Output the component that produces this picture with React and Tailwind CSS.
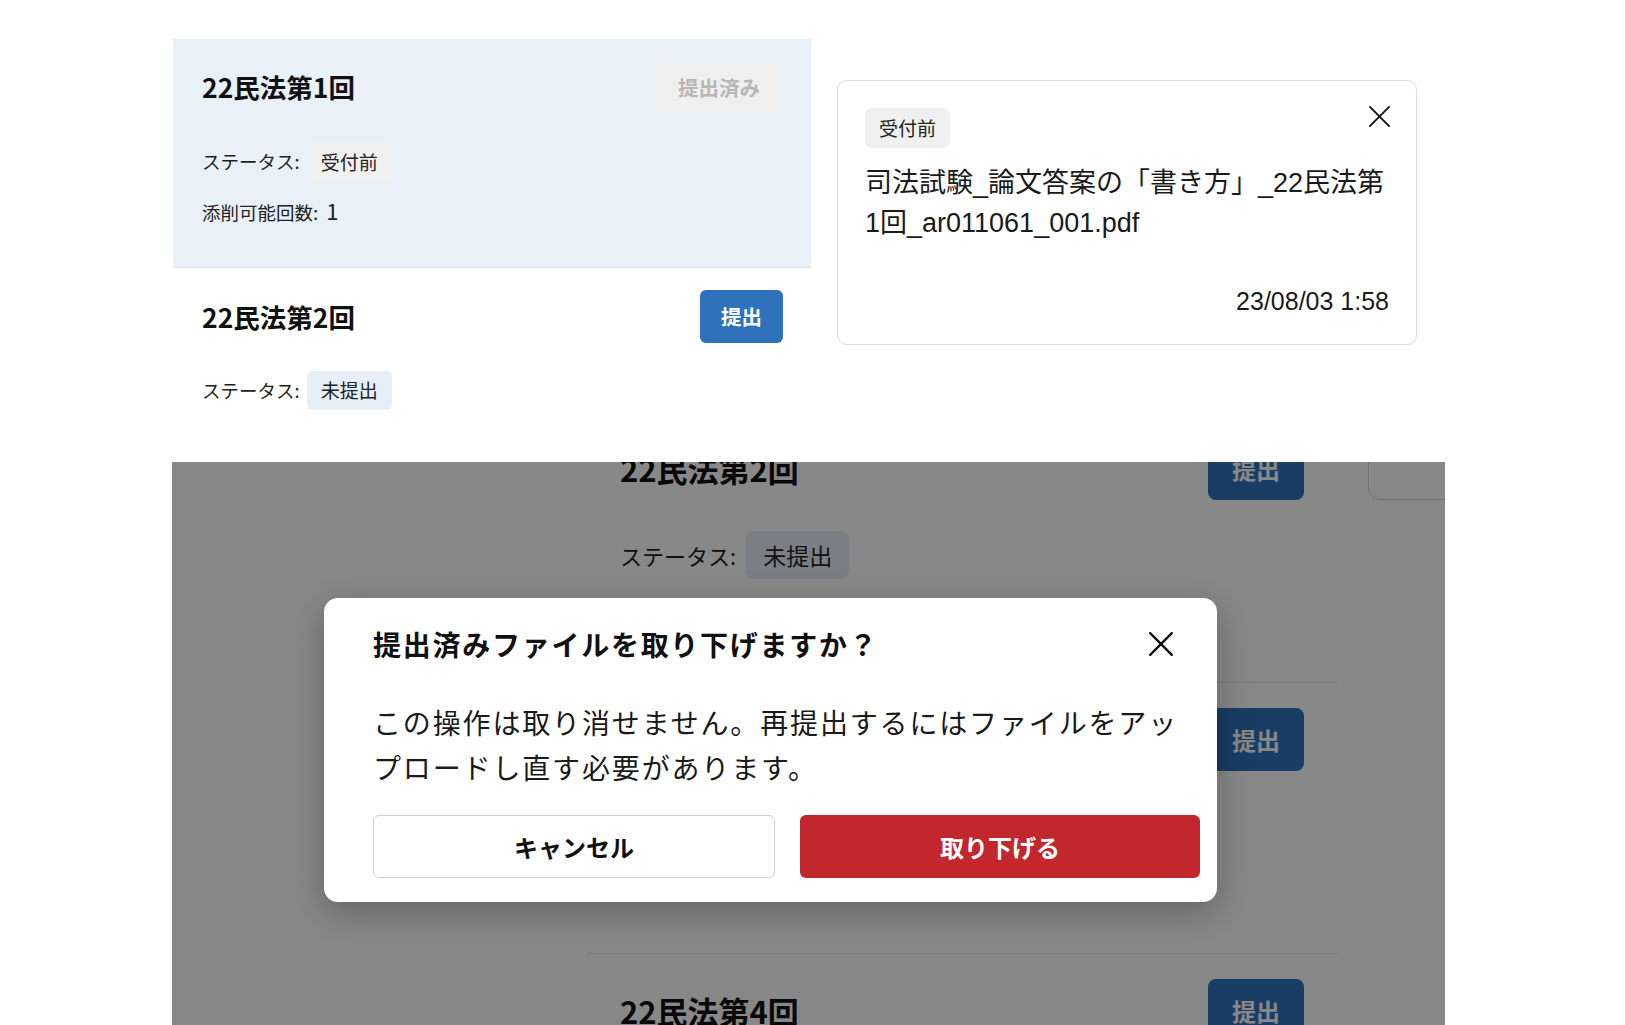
import React from 'react';

const font = "font-['Noto_Sans_CJK_JP',sans-serif]";
const latinFont = "font-['Liberation_Sans','Noto_Sans_CJK_JP',sans-serif]";

function CloseIcon({ size = 24, stroke = 2 }) {
    return (
        <svg width={size} height={size} viewBox="0 0 24 24" fill="none" stroke="#111" strokeWidth={stroke} strokeLinecap="round">
            <path d="M2 2L22 22" />
            <path d="M22 2L2 22" />
        </svg>
    );
}

// Top list (normal scale)
function TopList() {
    return (
        <div className="w-[638px] shrink-0">
            {/* item 1 - selected */}
            <div className="h-[229px] bg-[#e8f0f8] border-b border-[#dde2e8] px-[29px] pt-[23px]">
                <div className="flex items-center justify-between">
                    <h2 className="text-[26.5px] font-bold text-[#111] leading-[36px]">22民法第1回</h2>
                    <button className="h-[50px] px-[22px] rounded-md bg-[#efefef] text-[#b7b7b7] text-[20.5px] font-bold">
                        提出済み
                    </button>
                </div>
                <div className="mt-[30px] flex items-center">
                    <span className="text-[18.5px] text-[#222]">ステータス:</span>
                    <span className="ml-[7px] h-[40px] px-[14px] flex items-center rounded-md bg-[#f0f0f0] text-[19px] text-[#222]">受付前</span>
                </div>
                <div className="mt-[14px] flex items-baseline leading-[28px]">
                    <span className="text-[18.5px] text-[#222]">添削可能回数:</span>
                    <span className="ml-[8px] text-[22px] text-[#222]">1</span>
                </div>
            </div>
            {/* item 2 */}
            <div className="px-[28px] pl-[29px] pt-[22px]">
                <div className="flex items-center justify-between">
                    <h2 className="text-[26.5px] font-bold text-[#111] leading-[36px]">22民法第2回</h2>
                    <button className="h-[53px] px-[21px] rounded-md bg-[#2f72bb] text-white text-[20.5px] font-bold">
                        提出
                    </button>
                </div>
                <div className="mt-[28px] flex items-center">
                    <span className="text-[18.5px] text-[#222]">ステータス:</span>
                    <span className="ml-[7px] h-[39px] px-[14px] flex items-center rounded-md bg-[#e6eef7] text-[19px] text-[#222]">未提出</span>
                </div>
            </div>
        </div>
    );
}

function FileCard() {
    return (
        <div className="mt-[41px] ml-[26px] w-[580px] h-[265px] border border-[#dadada] rounded-[10px] pl-[27px] pr-[25px] pt-[24px] pb-[28px] flex flex-col">
            <div className="flex items-start justify-between">
                <span className="mt-[3px] h-[40px] px-[14px] flex items-center rounded-md bg-[#f0f0f0] text-[19px] text-[#222]">受付前</span>
                <CloseIcon size={23} stroke={2} />
            </div>
            <p className={`mt-[15px] text-[27px] leading-[40px] text-[#1a1a1a] ${latinFont}`}>
                司法試験_論文答案の「書き方」_22民法第<br />1回_ar011061_001.pdf
            </p>
            <div className={`mt-auto mr-[2px] text-right text-[25px] leading-[30px] text-[#1a1a1a] ${latinFont}`}>
                23/08/03 1:58
            </div>
        </div>
    );
}

// Underlying list behind the modal (zoomed screenshot, ~1.18x)
function BigItem({ title, hidden = false }) {
    return (
        <div className="h-[271px] border-t border-[#e6e6e6] px-[33px] pt-[25px]">
            <div className="flex items-center justify-between">
                <h2 className={`text-[31px] font-bold text-[#111] leading-[42px] ${hidden ? 'invisible' : ''}`}>{title}</h2>
                <button className="h-[63px] px-[24px] rounded-lg bg-[#2f72bb] text-white text-[24px] font-bold">
                    提出
                </button>
            </div>
            <div className={`mt-[31px] flex items-center ${hidden ? 'invisible' : ''}`}>
                <span className="text-[22px] text-[#222]">ステータス:</span>
                <span className="ml-[10px] h-[48px] px-[17px] flex items-center rounded-lg bg-[#e6eef7] text-[23px] text-[#222]">未提出</span>
            </div>
        </div>
    );
}

function ConfirmDialog() {
    return (
        <div className="absolute left-[152px] top-[136px] w-[893px] h-[304px] bg-white rounded-[14px] shadow-[0_10px_36px_rgba(0,0,0,0.28)] pl-[49px] pr-[17px] pt-[26px]">
            <div className="flex items-center justify-between pr-[26px]">
                <h3 className="text-[28px] font-bold leading-[40px] tracking-[0.062em] text-[#111]">
                    提出済みファイルを取り下げますか？
                </h3>
                <CloseIcon size={26} stroke={2.2} />
            </div>
            <p className="mt-[36px] text-[28px] leading-[45px] tracking-[0.066em] text-[#1a1a1a]">
                この操作は取り消せません。再提出するにはファイルをアッ<br />プロードし直す必要があります。
            </p>
            <div className="mt-[25px] flex gap-[25px]">
                <button className="flex-1 h-[63px] rounded-[6px] border border-[#cfcfcf] bg-white text-[24px] font-bold text-[#111]">
                    キャンセル
                </button>
                <button className="flex-1 h-[63px] rounded-[6px] bg-[#c1272d] text-[24px] font-bold text-white">
                    取り下げる
                </button>
            </div>
        </div>
    );
}

export default function App() {
    return (
        <div className={`w-[1625px] h-[1025px] bg-white overflow-hidden ${font}`}>
            {/* Top: list + file detail */}
            <div className="h-[462px] flex items-start pl-[173px] pt-[39px]">
                <TopList />
                <FileCard />
            </div>

            {/* Bottom: confirm dialog over the list */}
            <div className="relative ml-[172px] w-[1273px] h-[563px] bg-white overflow-hidden">
                <div className="flex items-start pl-[415px] -mt-[51px]">
                    <div className="w-[750px] shrink-0">
                        <BigItem title="22民法第2回" />
                        <BigItem title="22民法第3回" hidden />
                        <BigItem title="22民法第4回" />
                    </div>
                    <div className="ml-[31px] w-[220px] h-[89px] border border-[#dadada] rounded-[12px] bg-white shrink-0" />
                </div>
                <div className="absolute inset-0 bg-[rgba(0,0,0,0.467)]" />
                <ConfirmDialog />
            </div>
        </div>
    );
}
